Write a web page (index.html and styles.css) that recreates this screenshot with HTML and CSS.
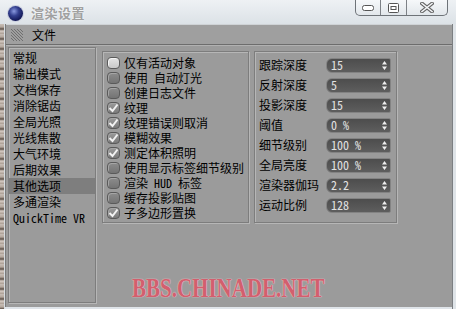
FILE: index.html
```html
<!DOCTYPE html>
<html>
<head>
<meta charset="utf-8">
<link rel="stylesheet" href="styles.css">
</head>
<body>
<div class="screen">
  <div class="titlebar">
    <span class="app-icon"></span>
    <span class="title">渲染设置</span>
    <div class="caption-btns">
      <span class="cbtn min"><svg width="12" height="6" viewBox="0 0 12 6"><rect x="0.5" y="0.5" width="11" height="5" rx="2" fill="#fff" stroke="#555"/></svg></span>
      <span class="cbtn max"><svg width="11" height="10" viewBox="0 0 11 10"><rect x="0.5" y="0.5" width="10" height="9" rx="1" fill="#fff" stroke="#555"/><rect x="3" y="3.5" width="5" height="3" fill="#fff" stroke="#555" stroke-width="1"/></svg></span>
      <span class="cbtn close"><svg width="14" height="11" viewBox="0 0 14 11"><path d="M2 1.5 L12 9.5 M12 1.5 L2 9.5" stroke="#666" stroke-width="3.6" stroke-linecap="square"/><path d="M2 1.5 L12 9.5 M12 1.5 L2 9.5" stroke="#f4f6f8" stroke-width="1.6" stroke-linecap="square"/></svg></span>
    </div>
  </div>
  <div class="frame">
    <div class="desk"></div>
    <div class="client">
      <div class="menubar">
        <span class="grip"></span>
        <span class="menu">文件</span>
      </div>
      <div class="content">
        <ul class="nav">
          <li>常规</li>
          <li>输出模式</li>
          <li>文档保存</li>
          <li>消除锯齿</li>
          <li>全局光照</li>
          <li>光线焦散</li>
          <li>大气环境</li>
          <li>后期效果</li>
          <li class="sel">其他选项</li>
          <li>多通渲染</li>
          <li>QuickTime VR</li>
        </ul>
        <div class="panels">
          <div class="panel checks">
            <div class="chk"><span class="box hover"></span><span class="txt">仅有活动对象</span></div>
            <div class="chk"><span class="box"></span><span class="txt">使用 自动灯光</span></div>
            <div class="chk"><span class="box"></span><span class="txt">创建日志文件</span></div>
            <div class="chk"><span class="box on"><svg width="11" height="10" viewBox="0 0 11 10"><path d="M1.5 5 L4.5 8 L9.5 1.5" fill="none" stroke="#f2f2f2" stroke-width="2"/></svg></span><span class="txt">纹理</span></div>
            <div class="chk"><span class="box on"><svg width="11" height="10" viewBox="0 0 11 10"><path d="M1.5 5 L4.5 8 L9.5 1.5" fill="none" stroke="#f2f2f2" stroke-width="2"/></svg></span><span class="txt">纹理错误则取消</span></div>
            <div class="chk"><span class="box on"><svg width="11" height="10" viewBox="0 0 11 10"><path d="M1.5 5 L4.5 8 L9.5 1.5" fill="none" stroke="#f2f2f2" stroke-width="2"/></svg></span><span class="txt">模糊效果</span></div>
            <div class="chk"><span class="box on"><svg width="11" height="10" viewBox="0 0 11 10"><path d="M1.5 5 L4.5 8 L9.5 1.5" fill="none" stroke="#f2f2f2" stroke-width="2"/></svg></span><span class="txt">测定体积照明</span></div>
            <div class="chk"><span class="box"></span><span class="txt">使用显示标签细节级别</span></div>
            <div class="chk"><span class="box"></span><span class="txt">渲染 HUD 标签</span></div>
            <div class="chk"><span class="box"></span><span class="txt">缓存投影贴图</span></div>
            <div class="chk"><span class="box on"><svg width="11" height="10" viewBox="0 0 11 10"><path d="M1.5 5 L4.5 8 L9.5 1.5" fill="none" stroke="#f2f2f2" stroke-width="2"/></svg></span><span class="txt">子多边形置换</span></div>
          </div>
          <div class="panel fields">
            <div class="field"><span class="label">跟踪深度</span><span class="input"><span class="val">15</span><svg class="spin" width="5" height="9" viewBox="0 0 5 9"><path d="M2.5 0 L5 3.5 L0 3.5Z M2.5 9 L5 5.5 L0 5.5Z" fill="#eee"/></svg></span></div>
            <div class="field"><span class="label">反射深度</span><span class="input"><span class="val">5</span><svg class="spin" width="5" height="9" viewBox="0 0 5 9"><path d="M2.5 0 L5 3.5 L0 3.5Z M2.5 9 L5 5.5 L0 5.5Z" fill="#eee"/></svg></span></div>
            <div class="field"><span class="label">投影深度</span><span class="input"><span class="val">15</span><svg class="spin" width="5" height="9" viewBox="0 0 5 9"><path d="M2.5 0 L5 3.5 L0 3.5Z M2.5 9 L5 5.5 L0 5.5Z" fill="#eee"/></svg></span></div>
            <div class="field"><span class="label">阈值</span><span class="input"><span class="val">0 %</span><svg class="spin" width="5" height="9" viewBox="0 0 5 9"><path d="M2.5 0 L5 3.5 L0 3.5Z M2.5 9 L5 5.5 L0 5.5Z" fill="#eee"/></svg></span></div>
            <div class="field"><span class="label">细节级别</span><span class="input"><span class="val">100 %</span><svg class="spin" width="5" height="9" viewBox="0 0 5 9"><path d="M2.5 0 L5 3.5 L0 3.5Z M2.5 9 L5 5.5 L0 5.5Z" fill="#eee"/></svg></span></div>
            <div class="field"><span class="label">全局亮度</span><span class="input"><span class="val">100 %</span><svg class="spin" width="5" height="9" viewBox="0 0 5 9"><path d="M2.5 0 L5 3.5 L0 3.5Z M2.5 9 L5 5.5 L0 5.5Z" fill="#eee"/></svg></span></div>
            <div class="field"><span class="label">渲染器伽玛</span><span class="input"><span class="val">2.2</span><svg class="spin" width="5" height="9" viewBox="0 0 5 9"><path d="M2.5 0 L5 3.5 L0 3.5Z M2.5 9 L5 5.5 L0 5.5Z" fill="#eee"/></svg></span></div>
            <div class="field"><span class="label">运动比例</span><span class="input"><span class="val">128</span><svg class="spin" width="5" height="9" viewBox="0 0 5 9"><path d="M2.5 0 L5 3.5 L0 3.5Z M2.5 9 L5 5.5 L0 5.5Z" fill="#eee"/></svg></span></div>
          </div>
        </div>
      </div>
      <div class="watermark">BBS.CHINADE.NET</div>
    </div>
    <div class="rim"></div>
  </div>
</div>
</body>
</html>
```

FILE: styles.css
```css
* { box-sizing: border-box; }
html, body { margin: 0; padding: 0; }
body {
  width: 456px;
  height: 309px;
  overflow: hidden;
  background: #dfe4e9;
  font-family: "Noto Sans Mono CJK SC", "Noto Sans CJK SC", monospace;
  font-size: 12px;
  line-height: 14px;
  color: #000;
}
.screen {
  width: 456px;
  height: 309px;
  display: flex;
  flex-direction: column;
}
.titlebar {
  height: 24px;
  display: flex;
  align-items: flex-start;
  background: linear-gradient(180deg, #eef1f4 0%, #e3e8ec 60%, #dce2e7 100%);
}
.app-icon {
  width: 15px;
  height: 15px;
  margin: 6px 0 0 8px;
  border-radius: 50%;
  background: radial-gradient(circle at 40% 35%, #8a9ae0 0%, #34408f 35%, #141a5a 70%, #0a0d33 100%);
  box-shadow: 0 0 0 1px #c9cfe0;
}
.title {
  margin: 5px 0 0 8px;
  font-size: 13px;
  line-height: 16px;
  font-weight: 700;
  color: #a0a0a0;
  letter-spacing: 0.5px;
  text-shadow: 0 0 2px #fff;
}
.caption-btns {
  margin-left: auto;
  margin-right: 8px;
  display: flex;
  height: 16px;
  border: 1px solid #6e7378;
  border-top: none;
  border-radius: 0 0 5px 5px;
  background: linear-gradient(180deg, #f6f8fa, #e2e7eb);
  overflow: hidden;
}
.cbtn {
  display: flex;
  align-items: center;
  justify-content: center;
  height: 15px;
}
.cbtn.min { width: 25px; border-right: 1px solid #7d8186; }
.cbtn.max { width: 26px; border-right: 1px solid #7d8186; }
.cbtn.close { width: 40px; }

.frame {
  flex: 1;
  display: flex;
}
.desk {
  width: 5px;
  background: repeating-linear-gradient(180deg, #c8beb6 0px, #b4a89e 3px, #5c5048 5px, #d6ccc4 7px, #a99c92 10px);
  border-right: 1px solid #d7dde2;
}
.client {
  width: 447px;
  height: 283px;
  background: #9b9b9b;
  position: relative;
  display: flex;
  flex-direction: column;
  border-left: 1px solid #7a7a7a;
}
.rim {
  width: 4px;
  background: #dfe4e8;
  border-left: 1px solid #7c7f82;
}
.menubar {
  height: 21px;
  display: flex;
  align-items: center;
  padding-left: 5px;
  background: #9f9f9f;
  border-top: 1px solid #cfd3d6;
  border-bottom: 1px solid #6d6d6d;
  box-shadow: 0 1px 0 #b1b1b1;
}
.grip {
  width: 12px;
  height: 12px;
  background-image:
    linear-gradient(45deg, transparent 0 40%, #6a6a6a 40% 60%, transparent 60%);
  background-size: 3px 3px;
  opacity: 0.9;
  margin-right: 9px;
}
.menu { line-height: 14px; }

.content {
  display: flex;
  padding: 2px 0 0 2px;
}
.nav {
  list-style: none;
  margin: 0 6px 0 0;
  padding: 2px 0 0 0;
  width: 88px;
  height: 256px;
  border: 1px solid #7d7d7d;
  box-shadow: inset 1px 1px 0 #b6b6b6, 1px 1px 0 #b6b6b6;
}
.nav li {
  height: 16px;
  line-height: 16px;
  padding-left: 4px;
  white-space: nowrap;
}
.nav li.sel { background: #7e7e7e; }
.panels {
  display: flex;
  gap: 5px;
  padding-top: 4px;
}
.panel {
  height: 172px;
  border: 1px solid #7d7d7d;
  box-shadow: inset 1px 1px 0 #b6b6b6, 1px 1px 0 #b6b6b6;
}
.checks {
  width: 147px;
  padding: 3px 0 0 4px;
}
.chk {
  height: 15px;
  display: flex;
  align-items: center;
  white-space: nowrap;
}
.txt { line-height: 13px; }
.box {
  width: 13px;
  height: 12px;
  flex: none;
  margin-right: 4px;
  border-radius: 4px;
  background: linear-gradient(180deg, #8c8c8c, #747474);
  border: 1px solid #5a5a5a;
  box-shadow: inset 1px 1px 0 #a5a5a5;
  display: flex;
  align-items: center;
  justify-content: center;
}
.box.hover {
  background: linear-gradient(180deg, #e4e4e4, #c8c8c8);
  box-shadow: inset 1px 1px 0 #f4f4f4;
}
.box.on {
  background: linear-gradient(180deg, #9a9a9a, #7a7a7a);
}
.fields {
  width: 143px;
  padding: 3px 0 0 4px;
}
.field {
  height: 20px;
  display: flex;
  align-items: center;
}
.label {
  width: 67px;
  line-height: 14px;
  white-space: nowrap;
}
.input {
  width: 65px;
  height: 15px;
  display: flex;
  align-items: center;
  padding: 0 3px 0 4px;
  background: linear-gradient(180deg, #4d4d4d, #5e5e5e);
  border: 1px solid #838383;
  border-radius: 6px 2px 2px 6px;
  color: #e2e2e2;
}
.val { line-height: 12px; white-space: pre; }
.spin { margin-left: auto; }

.watermark {
  position: absolute;
  left: 126px;
  top: 252px;
  font-family: "Liberation Serif", serif;
  font-weight: 700;
  font-size: 21px;
  line-height: 21px;
  color: #d25f6e;
  transform: scaleY(1.25);
  transform-origin: left top;
  text-shadow: 0 0 1px #f0c8cc, 0 0 1px #f0c8cc;
  white-space: nowrap;
}
```
